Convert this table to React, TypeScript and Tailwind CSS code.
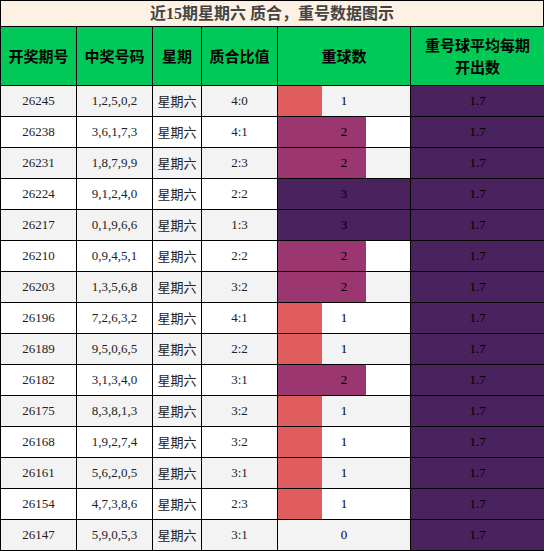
import React from 'react'

const rows = [
  { id: '26245', nums: '1,2,5,0,2', ratio: '4:0', rep: 1 },
  { id: '26238', nums: '3,6,1,7,3', ratio: '4:1', rep: 2 },
  { id: '26231', nums: '1,8,7,9,9', ratio: '2:3', rep: 2 },
  { id: '26224', nums: '9,1,2,4,0', ratio: '2:2', rep: 3 },
  { id: '26217', nums: '0,1,9,6,6', ratio: '1:3', rep: 3 },
  { id: '26210', nums: '0,9,4,5,1', ratio: '2:2', rep: 2 },
  { id: '26203', nums: '1,3,5,6,8', ratio: '3:2', rep: 2 },
  { id: '26196', nums: '7,2,6,3,2', ratio: '4:1', rep: 1 },
  { id: '26189', nums: '9,5,0,6,5', ratio: '2:2', rep: 1 },
  { id: '26182', nums: '3,1,3,4,0', ratio: '3:1', rep: 2 },
  { id: '26175', nums: '8,3,8,1,3', ratio: '3:2', rep: 1 },
  { id: '26168', nums: '1,9,2,7,4', ratio: '3:2', rep: 1 },
  { id: '26161', nums: '5,6,2,0,5', ratio: '3:1', rep: 1 },
  { id: '26154', nums: '4,7,3,8,6', ratio: '2:3', rep: 1 },
  { id: '26147', nums: '5,9,0,5,3', ratio: '3:1', rep: 0 },
]

const barColor: Record<number, string> = {
  1: 'bg-[#e05d5d]',
  2: 'bg-[#9c3670]',
  3: 'bg-[#4a225d]',
}

const MAX = 3

export default function App() {
  return (
    <div className="w-[544px] h-[551px] bg-white overflow-hidden" style={{ fontFamily: '"Liberation Serif", "Noto Sans CJK SC", serif' }}>
      {/* Title */}
      <div className="h-[27px] border border-black bg-[#fdf1e4] flex items-center justify-center text-[16px] font-bold text-[#444]">
        近15期星期六 质合，重号数据图示
      </div>

      <table className="w-[544px] table-fixed border-collapse">
        <colgroup>
          <col className="w-[76px]" />
          <col className="w-[76px]" />
          <col className="w-[49px]" />
          <col className="w-[76px]" />
          <col className="w-[133px]" />
          <col className="w-[134px]" />
        </colgroup>
        <thead>
          <tr className="h-[58px] bg-[#00c957] text-[15px] font-bold text-black" style={{ fontFamily: '"Noto Sans CJK SC", sans-serif' }}>
            <th className="border border-black border-t-0 font-bold">开奖期号</th>
            <th className="border border-black border-t-0 font-bold">中奖号码</th>
            <th className="border border-black border-t-0 font-bold">星期</th>
            <th className="border border-black border-t-0 font-bold">质合比值</th>
            <th className="border border-black border-t-0 font-bold">重球数</th>
            <th className="border border-black border-t-0 font-bold leading-[22px] px-2">重号球平均每期开出数</th>
          </tr>
        </thead>
        <tbody className="text-[13px] text-[#222]">
          {rows.map((r, i) => (
            <tr key={r.id} className={`h-[31px] ${i % 2 === 0 ? 'bg-[#f3f3f3]' : 'bg-white'}`}>
              <td className="border border-black text-center p-0">{r.id}</td>
              <td className="border border-black text-center p-0">{r.nums}</td>
              <td className="border border-black text-center p-0 text-[13px]" style={{ fontFamily: '"Noto Sans CJK SC", sans-serif' }}>星期六</td>
              <td className="border border-black text-center p-0">{r.ratio}</td>
              <td className="border border-black p-0 h-[31px]">
                <div className="relative h-[30px] flex items-center justify-center">
                  {r.rep > 0 && (
                    <div
                      className={`absolute left-0 top-0 bottom-0 ${barColor[r.rep]}`}
                      style={{ width: `${(r.rep / MAX) * 100}%` }}
                    />
                  )}
                  <span className="relative text-black">{r.rep}</span>
                </div>
              </td>
              <td className="border border-black text-center p-0 bg-[#4a225d] text-black">1.7</td>
            </tr>
          ))}
        </tbody>
      </table>
    </div>
  )
}
